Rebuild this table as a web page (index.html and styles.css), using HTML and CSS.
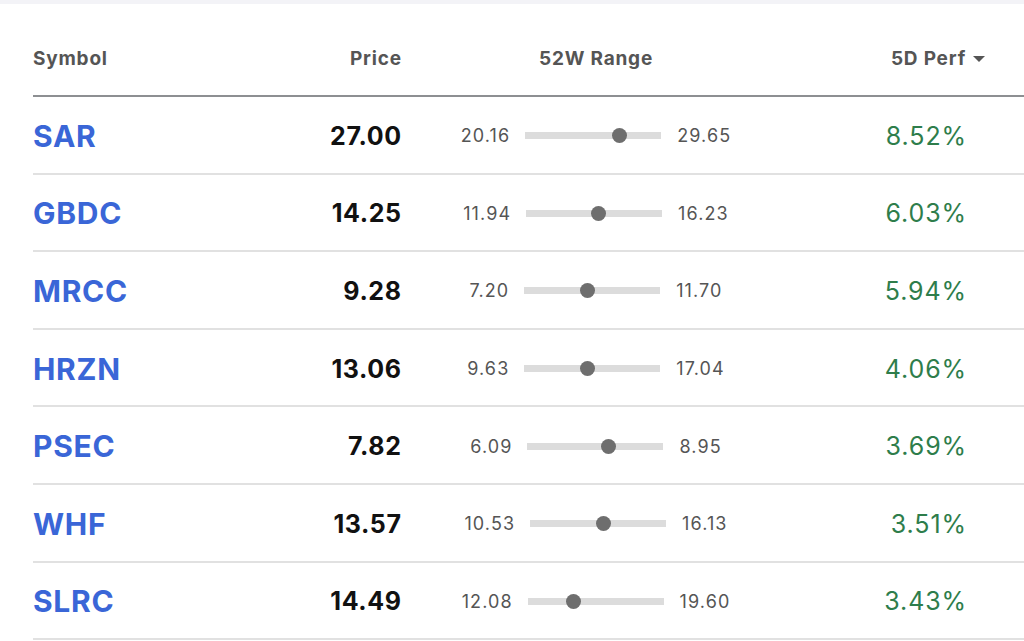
FILE: index.html
```html
<!DOCTYPE html>
<html lang="en">
<head>
<meta charset="utf-8">
<title>Screener</title>
<link rel="stylesheet" href="styles.css">
</head>
<body>
<div class="topstrip"></div>
<div class="table">
  <div class="row head">
    <div class="c sym">Symbol</div>
    <div class="c price">Price</div>
    <div class="c range">52W Range</div>
    <div class="c perf"><span>5D Perf</span><span class="caret"></span></div>
  </div>
  <div class="row">
    <div class="c sym"><a class="ticker" href="#">SAR</a></div>
    <div class="c price">27.00</div>
    <div class="c range"><span class="lo">20.16</span><span class="bar"><span class="dot" style="--p:0.7208"></span></span><span class="hi">29.65</span></div>
    <div class="c perf">8.52%</div>
  </div>
  <div class="row">
    <div class="c sym"><a class="ticker" href="#">GBDC</a></div>
    <div class="c price">14.25</div>
    <div class="c range"><span class="lo">11.94</span><span class="bar"><span class="dot" style="--p:0.5385"></span></span><span class="hi">16.23</span></div>
    <div class="c perf">6.03%</div>
  </div>
  <div class="row">
    <div class="c sym"><a class="ticker" href="#">MRCC</a></div>
    <div class="c price">9.28</div>
    <div class="c range"><span class="lo">7.20</span><span class="bar"><span class="dot" style="--p:0.4622"></span></span><span class="hi">11.70</span></div>
    <div class="c perf">5.94%</div>
  </div>
  <div class="row">
    <div class="c sym"><a class="ticker" href="#">HRZN</a></div>
    <div class="c price">13.06</div>
    <div class="c range"><span class="lo">9.63</span><span class="bar"><span class="dot" style="--p:0.4629"></span></span><span class="hi">17.04</span></div>
    <div class="c perf">4.06%</div>
  </div>
  <div class="row">
    <div class="c sym"><a class="ticker" href="#">PSEC</a></div>
    <div class="c price">7.82</div>
    <div class="c range"><span class="lo">6.09</span><span class="bar"><span class="dot" style="--p:0.6049"></span></span><span class="hi">8.95</span></div>
    <div class="c perf">3.69%</div>
  </div>
  <div class="row">
    <div class="c sym"><a class="ticker" href="#">WHF</a></div>
    <div class="c price">13.57</div>
    <div class="c range"><span class="lo">10.53</span><span class="bar"><span class="dot" style="--p:0.5429"></span></span><span class="hi">16.13</span></div>
    <div class="c perf">3.51%</div>
  </div>
  <div class="row">
    <div class="c sym"><a class="ticker" href="#">SLRC</a></div>
    <div class="c price">14.49</div>
    <div class="c range"><span class="lo">12.08</span><span class="bar"><span class="dot" style="--p:0.3205"></span></span><span class="hi">19.60</span></div>
    <div class="c perf">3.43%</div>
  </div>
</div>
</body>
</html>
```

FILE: styles.css
```css
* { box-sizing: border-box; }
html, body { margin: 0; padding: 0; background: #ffffff; }
body {
  font-family: Inter, "Liberation Sans", sans-serif;
  color: #111;
  overflow: hidden;
}
.topstrip { height: 4px; background: #f3f3f7; }
.table { margin-left: 33px; width: 991px; }
.row {
  display: grid;
  grid-template-columns: 268px 100px 390px 1fr;
  align-items: center;
  height: 77.6px;
  padding-top: 2px;
  border-bottom: 2px solid #e1e1e1;
}
.row.head {
  height: 93px;
  padding-top: 0;
  align-items: end;
  padding-bottom: 26px;
  border-bottom: 2px solid #8d8f92;
}
.c { white-space: nowrap; }
.head .c {
  font-size: 19px;
  line-height: 20px;
  font-weight: 700;
  letter-spacing: 0.8px;
  color: #555;
}
.sym { text-align: left; }
.price {
  text-align: right;
  font-size: 25px;
  font-weight: 700;
  letter-spacing: 0.6px;
  margin-right: -0.6px;
  color: #111;
}
.head .price { margin-right: -0.8px; }
.range { display: flex; justify-content: center; align-items: center; }
.perf {
  text-align: right;
  padding-right: 57px;
  font-size: 25px;
  letter-spacing: 0.9px;
  color: #2e7d4b;
}
.head .perf {
  display: flex;
  justify-content: flex-end;
  align-items: center;
  gap: 7px;
  padding-right: 39px;
}
.caret {
  width: 0; height: 0;
  border-left: 6px solid transparent;
  border-right: 6px solid transparent;
  border-top: 6px solid #555;
}
.ticker {
  color: #3a66d7;
  text-decoration: none;
  font-size: 30px;
  font-weight: 700;
  letter-spacing: 0.7px;
}
.lo, .hi { font-size: 18px; letter-spacing: 1.1px; color: #555; }
.lo { margin-right: -1.1px; }
.bar {
  position: relative;
  width: 136px;
  height: 7px;
  background: #dcdcdc;
  margin: 0 16px;
}
.dot {
  position: absolute;
  top: 50%;
  left: calc(var(--p) * (100% - 15px));
  width: 15px;
  height: 15px;
  margin-top: -7.5px;
  border-radius: 50%;
  background: #6e6e6e;
}
```
